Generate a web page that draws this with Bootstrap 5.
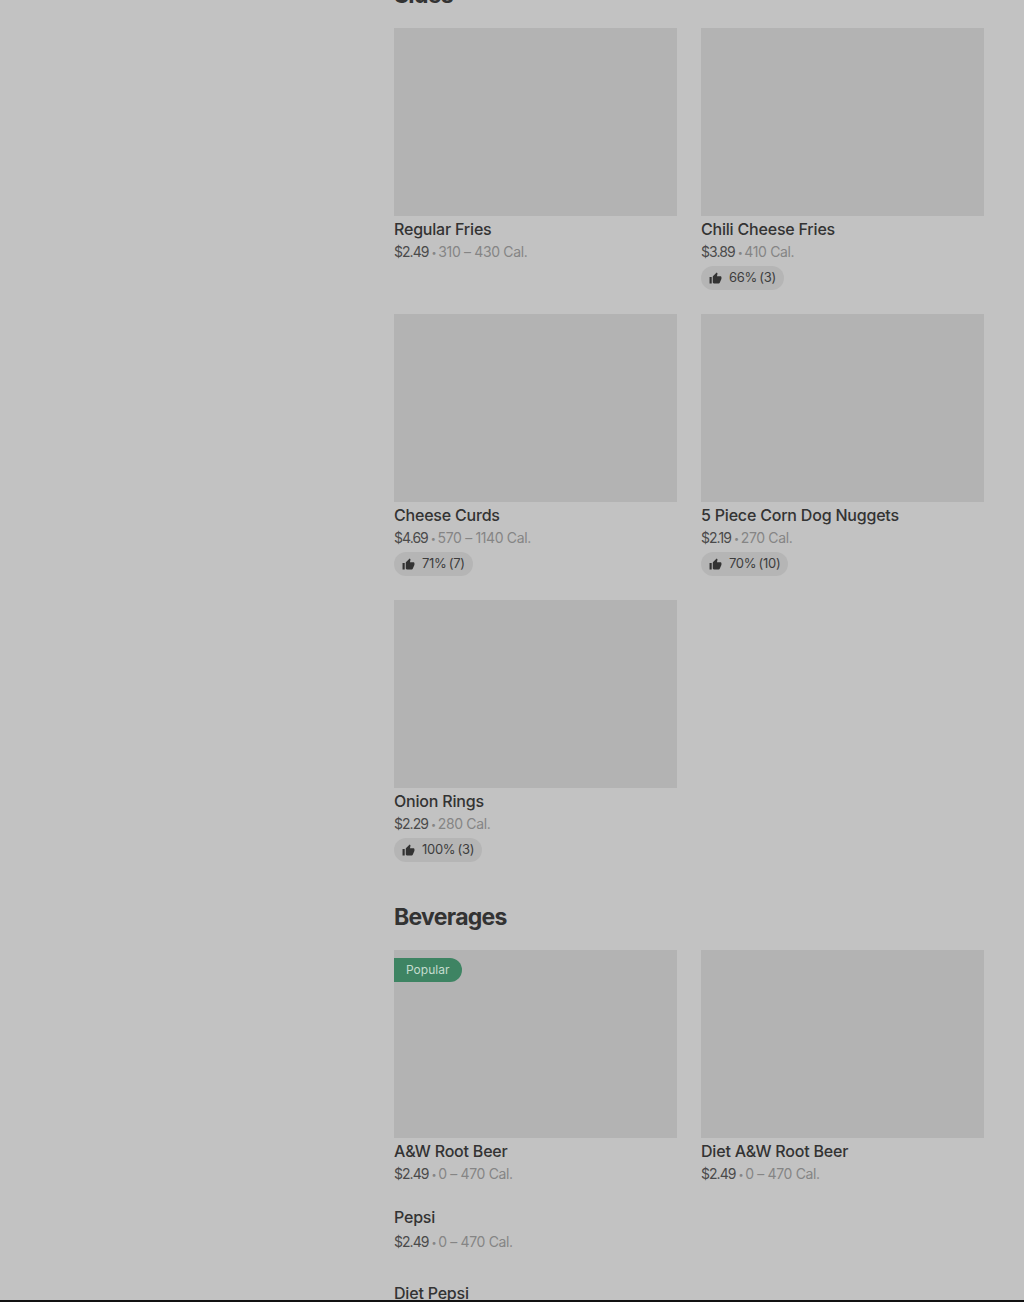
<!DOCTYPE html>
<html lang="en">
<head>
    <meta charset="UTF-8">
    <title>Menu</title>
    <link href="https://cdn.jsdelivr.net/npm/bootstrap@5.3.2/dist/css/bootstrap.min.css" rel="stylesheet">
    <style>
        body { background: #c2c2c2; color: #333; font-family: "Inter", "Liberation Sans", sans-serif; height: 1302px; overflow: hidden; }
        .menu-main { width: 590px; margin-left: 394px; margin-top: -22px; }
        .menu-heading { font-family: "Inter", "Liberation Sans", sans-serif; font-size: 23px; font-weight: 700; line-height: 34px; letter-spacing: -.7px; margin: 0 0 16px; color: #333; }
        .menu-section { margin-bottom: 38px; }
        .menu-grid { display: grid; grid-template-columns: 283px 283px; column-gap: 24px; row-gap: 24px; }
        .photo { height: 188px; background: #b3b3b3; }
        .dish-name { font-size: 16px; line-height: 24px; font-weight: 500; margin-top: 1px; letter-spacing: -.2px; }
        .dish-meta { height: 22px; font-size: 14px; line-height: 22px; color: #858585; letter-spacing: -.35px; }
        .dish-price { color: #4a4a4a; letter-spacing: -.95px; }
        .dish-sep { font-size: 9px; line-height: 0; margin: 0 2px 0 3px; vertical-align: 1px; }
        .rating { width: fit-content; height: 24px; margin-top: 3px; padding: 0 8px; background: #b5b5b5; border-radius: 12px; font-size: 13px; color: #3d3d3d; gap: 7px; letter-spacing: -.3px; word-spacing: -1px; }
        .rating svg { width: 13px; height: 13px; fill: #333; }
        .tag-popular { top: 8px; left: 0; height: 24px; padding: 0 13px 0 12px; background: #3e8463; color: #c5dccf; font-size: 12px; line-height: 24px; border-radius: 0 12px 12px 0; }
        .dish-plain { margin-top: -4px; padding-bottom: 8px; }
        .dish-plain .dish-name { margin-top: 0; }
        .dish-plain .dish-meta { margin-top: 2px; }
        .page-edge { height: 2px; background: #111; }
    </style>
</head>
<body>

<div class="menu-main">
    <section class="menu-section">
        <h2 class="menu-heading">Sides</h2>
        <div class="menu-grid">
            <div>
                <div class="photo"></div>
                <div class="dish-name">Regular Fries</div>
                <div class="dish-meta"><span class="dish-price">$2.49</span><span class="dish-sep">•</span>310 – 430 Cal.</div>
            </div>
            <div>
                <div class="photo"></div>
                <div class="dish-name">Chili Cheese Fries</div>
                <div class="dish-meta"><span class="dish-price">$3.89</span><span class="dish-sep">•</span>410 Cal.</div>
                <div class="rating d-flex align-items-center"><svg viewBox="0 0 24 24"><path d="M1 21h4V9H1v12zm22-11c0-1.1-.9-2-2-2h-6.31l.95-4.57.03-.32c0-.41-.17-.79-.44-1.06L14.17 1 7.59 7.59C7.22 7.95 7 8.45 7 9v10c0 1.1.9 2 2 2h9c.83 0 1.54-.5 1.84-1.22l3.02-7.05c.09-.23.14-.47.14-.73v-2z"/></svg>66% (3)</div>
            </div>
            <div>
                <div class="photo"></div>
                <div class="dish-name">Cheese Curds</div>
                <div class="dish-meta"><span class="dish-price">$4.69</span><span class="dish-sep">•</span>570 – 1140 Cal.</div>
                <div class="rating d-flex align-items-center"><svg viewBox="0 0 24 24"><path d="M1 21h4V9H1v12zm22-11c0-1.1-.9-2-2-2h-6.31l.95-4.57.03-.32c0-.41-.17-.79-.44-1.06L14.17 1 7.59 7.59C7.22 7.95 7 8.45 7 9v10c0 1.1.9 2 2 2h9c.83 0 1.54-.5 1.84-1.22l3.02-7.05c.09-.23.14-.47.14-.73v-2z"/></svg>71% (7)</div>
            </div>
            <div>
                <div class="photo"></div>
                <div class="dish-name">5 Piece Corn Dog Nuggets</div>
                <div class="dish-meta"><span class="dish-price">$2.19</span><span class="dish-sep">•</span>270 Cal.</div>
                <div class="rating d-flex align-items-center"><svg viewBox="0 0 24 24"><path d="M1 21h4V9H1v12zm22-11c0-1.1-.9-2-2-2h-6.31l.95-4.57.03-.32c0-.41-.17-.79-.44-1.06L14.17 1 7.59 7.59C7.22 7.95 7 8.45 7 9v10c0 1.1.9 2 2 2h9c.83 0 1.54-.5 1.84-1.22l3.02-7.05c.09-.23.14-.47.14-.73v-2z"/></svg>70% (10)</div>
            </div>
            <div>
                <div class="photo"></div>
                <div class="dish-name">Onion Rings</div>
                <div class="dish-meta"><span class="dish-price">$2.29</span><span class="dish-sep">•</span>280 Cal.</div>
                <div class="rating d-flex align-items-center"><svg viewBox="0 0 24 24"><path d="M1 21h4V9H1v12zm22-11c0-1.1-.9-2-2-2h-6.31l.95-4.57.03-.32c0-.41-.17-.79-.44-1.06L14.17 1 7.59 7.59C7.22 7.95 7 8.45 7 9v10c0 1.1.9 2 2 2h9c.83 0 1.54-.5 1.84-1.22l3.02-7.05c.09-.23.14-.47.14-.73v-2z"/></svg>100% (3)</div>
            </div>
        </div>
    </section>

    <section class="menu-section">
        <h2 class="menu-heading">Beverages</h2>
        <div class="menu-grid">
            <div>
                <div class="position-relative">
                    <div class="photo"></div>
                    <span class="tag-popular position-absolute">Popular</span>
                </div>
                <div class="dish-name">A&amp;W Root Beer</div>
                <div class="dish-meta"><span class="dish-price">$2.49</span><span class="dish-sep">•</span>0 – 470 Cal.</div>
            </div>
            <div>
                <div class="photo"></div>
                <div class="dish-name">Diet A&amp;W Root Beer</div>
                <div class="dish-meta"><span class="dish-price">$2.49</span><span class="dish-sep">•</span>0 – 470 Cal.</div>
            </div>
            <div class="dish-plain">
                <div class="dish-name">Pepsi</div>
                <div class="dish-meta"><span class="dish-price">$2.49</span><span class="dish-sep">•</span>0 – 470 Cal.</div>
            </div>
            <div></div>
            <div class="dish-plain">
                <div class="dish-name">Diet Pepsi</div>
            </div>
        </div>
    </section>
</div>

<div class="page-edge position-fixed bottom-0 start-0 w-100"></div>

<script src="https://cdn.jsdelivr.net/npm/bootstrap@5.3.2/dist/js/bootstrap.bundle.min.js"></script>
</body>
</html>
